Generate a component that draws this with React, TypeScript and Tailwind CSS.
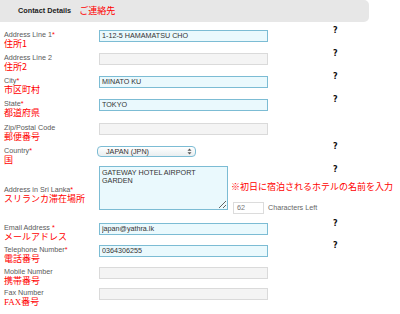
import React from 'react';

interface RowProps {
  label: string;
  star?: string;
  jp: string;
  serifJp?: boolean;
  value?: string;
  help?: boolean;
  rowClass: string;
}

const jpFont = { fontFamily: '"Noto Sans CJK JP", sans-serif' };
const helpFont = { fontFamily: 'Verdana, "DejaVu Sans", sans-serif' };

const Label = ({ label, star, jp, serifJp }: Pick<RowProps, 'label' | 'star' | 'jp' | 'serifJp'>) => (
  <div className="w-[99px] shrink-0 pl-[4px]">
    <div className="text-[7.2px] leading-[8px] text-[#5a5a5a] mt-[1px] whitespace-nowrap">
      {label}
      {star && <span className="text-[#f00]">{star}</span>}
    </div>
    {serifJp ? (
      <div className="text-[9px] leading-[10px] text-[#f00] whitespace-nowrap">
        <span style={{ fontFamily: '"Liberation Serif", serif' }}>FAX</span>
        <span style={jpFont}>{jp}</span>
      </div>
    ) : (
      <div className="text-[9px] leading-[10px] text-[#f00] whitespace-nowrap" style={jpFont}>
        {jp}
      </div>
    )}
  </div>
);

// the "?" sits at x=333 in every row
const Help = ({ show }: { show?: boolean }) =>
  show ? (
    <div className="ml-[65px] mt-[-3px] text-[8px] leading-[8px] font-bold text-[#111]" style={helpFont}>
      ?
    </div>
  ) : null;

const FieldRow = ({ label, star, jp, serifJp, value, help, rowClass }: RowProps) => {
  const filled = value !== undefined;
  return (
    <div className={`flex items-start ${rowClass}`}>
      <Label label={label} star={star} jp={jp} serifJp={serifJp} />
      <input
        readOnly
        value={value ?? ''}
        className={
          filled
            ? 'w-[169px] h-[11.5px] border border-[#7cbcd4] bg-[#eaf9fd] px-[2px] text-[7.2px] leading-[9px] text-[#333] outline-none'
            : 'w-[169px] h-[11.5px] border border-[#dadada] bg-[#f4f4f4] px-[2px] text-[7.2px] leading-[9px] text-[#333] outline-none'
        }
      />
      <Help show={help} />
    </div>
  );
};

export default function App() {
  return (
    <div
      className="w-[400px] h-[314px] bg-white overflow-hidden"
      style={{ fontFamily: '"Liberation Sans", Arial, sans-serif' }}
    >
      <div className="h-[22px] w-[369px] bg-[#e7e7e7] rounded-r-[5px] flex items-center pl-[18px] gap-[8px]">
        <span className="text-[7.3px] font-bold text-[#1c1c1c]">Contact Details</span>
        <span className="text-[9px] text-[#f00]" style={jpFont}>
          ご連絡先
        </span>
      </div>

      <div className="mt-[8px] flex flex-col">
        <FieldRow rowClass="h-[23px]" label="Address Line 1" star="*" jp="住所1" value="1-12-5 HAMAMATSU CHO" help />
        <FieldRow rowClass="h-[23px]" label="Address Line 2" jp="住所2" help />
        <FieldRow rowClass="h-[23px]" label="City" star="*" jp="市区町村" value="MINATO KU" help />
        <FieldRow rowClass="h-[24px]" label="State" star="*" jp="都道府県" value="TOKYO" help />
        <FieldRow rowClass="h-[23px]" label="Zip/Postal Code" jp="郵便番号" />

        {/* country select */}
        <div className="flex items-start h-[20px]">
          <Label label="Country" star="*" jp="国" />
          <div className="ml-[-2px] w-[99px] h-[11px] rounded-[4px] border border-[#7cbcd4] bg-gradient-to-b from-white to-[#e9eef0] flex items-center pl-[8px] pr-[3px]">
            <span className="flex-1 text-[7.2px] leading-[8px] text-[#333]">JAPAN (JPN)</span>
            <svg width="5" height="7" viewBox="0 0 5 7" className="text-[#555]">
              <path d="M2.5 0.5 L4.5 2.8 L0.5 2.8 Z" fill="currentColor" />
              <path d="M2.5 6.5 L4.5 4.2 L0.5 4.2 Z" fill="currentColor" />
            </svg>
          </div>
          <div className="ml-[72px]">
            <Help show />
          </div>
        </div>

        {/* address in Sri Lanka */}
        <div className="flex items-start h-[57px]">
          <div className="pt-[19px]">
            <Label label="Address in Sri Lanka" star="*" jp="スリランカ滞在場所" />
          </div>
          <textarea
            readOnly
            value={'GATEWAY HOTEL AIRPORT\nGARDEN'}
            className="w-[129px] h-[44px] border border-[#7cbcd4] bg-[#eaf9fd] px-[2px] pt-[2px] text-[7.2px] leading-[8px] text-[#333] outline-none"
          />
          <div className="relative w-[105px] h-[44px] shrink-0">
            <div
              className="absolute left-[105px] top-[0px] text-[8px] leading-[8px] font-bold text-[#111]"
              style={helpFont}
            >
              ?
            </div>
            <div
              className="absolute left-[3px] top-[16px] text-[9px] leading-[10px] text-[#f00] whitespace-nowrap"
              style={jpFont}
            >
              ※初日に宿泊されるホテルの名前を入力
            </div>
            <div className="absolute left-[5px] top-[36px] flex items-center gap-[4px]">
              <div className="w-[31px] h-[12px] border border-[#dcdcdc] bg-white text-[7.2px] leading-[10px] pl-[3px] text-[#777]">
                62
              </div>
              <span className="text-[7.2px] text-[#666] whitespace-nowrap">Characters Left</span>
            </div>
          </div>
        </div>

        <FieldRow rowClass="h-[22px]" label="Email Address " star="*" jp="メールアドレス" value="japan@yathra.lk" help />
        <FieldRow rowClass="h-[22px]" label="Telephone Number" star="*" jp="電話番号" value="0364306255" help />
        <FieldRow rowClass="h-[21px]" label="Mobile Number" jp="携帯番号" />
        <FieldRow rowClass="h-[21px]" label="Fax Number" jp="番号" serifJp />
      </div>
    </div>
  );
}
